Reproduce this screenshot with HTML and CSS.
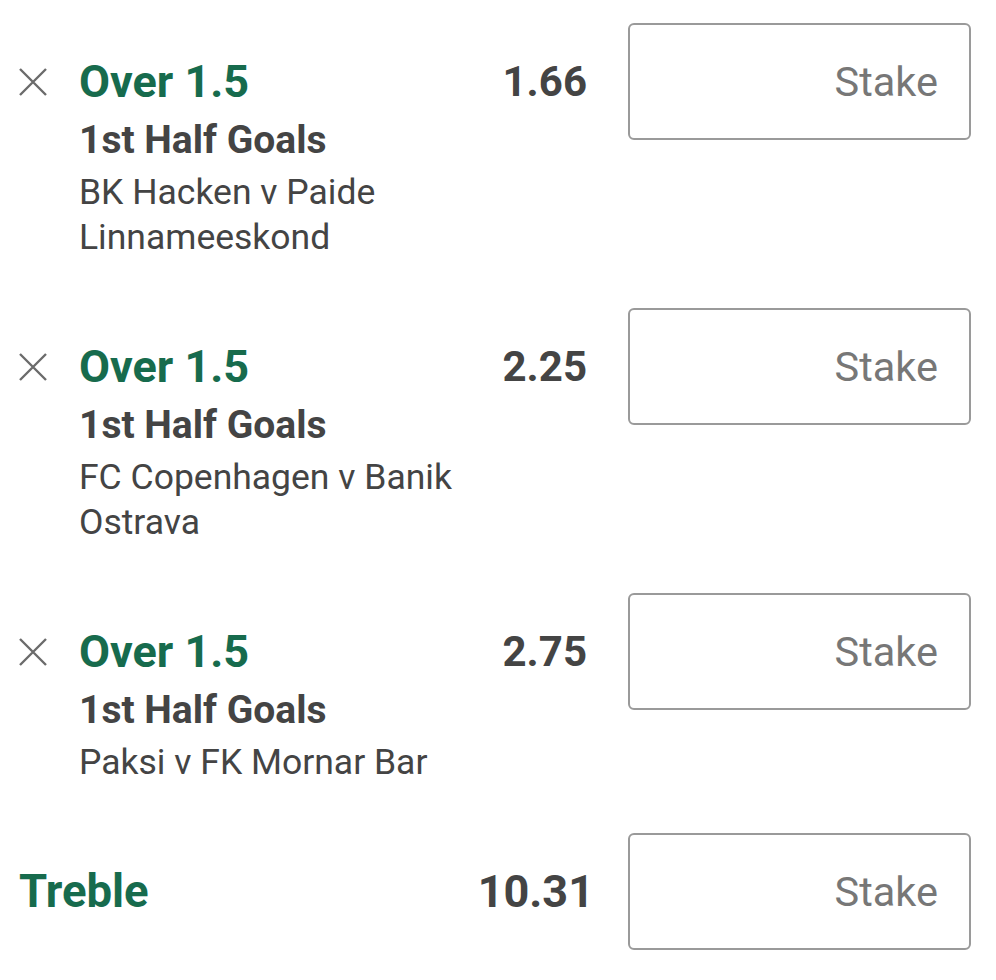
FILE: index.html
```html
<!DOCTYPE html>
<html lang="en">
<head>
    <meta charset="UTF-8">
    <meta name="viewport" content="width=device-width, initial-scale=1.0">
    <title>Bet Slip</title>
    <link rel="stylesheet" href="styles.css">
</head>
<body>
    <div class="slip">
        <!-- Selection 1 -->
        <div class="bet-row">
            <div class="remove">
                <svg width="28" height="28" viewBox="0 0 28 28"><path d="M1 1 L27 27 M27 1 L1 27" stroke="#6b6b6b" stroke-width="2.4" fill="none"/></svg>
            </div>
            <div class="bet-info">
                <div class="bet-title">Over 1.5</div>
                <div class="bet-market">1st Half Goals</div>
                <div class="bet-event">BK Hacken v Paide Linnameeskond</div>
            </div>
            <div class="bet-odds">1.66</div>
            <div class="stake-box"><span class="stake-label">Stake</span></div>
        </div>
        <!-- Selection 2 -->
        <div class="bet-row">
            <div class="remove">
                <svg width="28" height="28" viewBox="0 0 28 28"><path d="M1 1 L27 27 M27 1 L1 27" stroke="#6b6b6b" stroke-width="2.4" fill="none"/></svg>
            </div>
            <div class="bet-info">
                <div class="bet-title">Over 1.5</div>
                <div class="bet-market">1st Half Goals</div>
                <div class="bet-event">FC Copenhagen v Banik Ostrava</div>
            </div>
            <div class="bet-odds">2.25</div>
            <div class="stake-box"><span class="stake-label">Stake</span></div>
        </div>
        <!-- Selection 3 -->
        <div class="bet-row">
            <div class="remove">
                <svg width="28" height="28" viewBox="0 0 28 28"><path d="M1 1 L27 27 M27 1 L1 27" stroke="#6b6b6b" stroke-width="2.4" fill="none"/></svg>
            </div>
            <div class="bet-info">
                <div class="bet-title">Over 1.5</div>
                <div class="bet-market">1st Half Goals</div>
                <div class="bet-event">Paksi v FK Mornar Bar</div>
            </div>
            <div class="bet-odds">2.75</div>
            <div class="stake-box"><span class="stake-label">Stake</span></div>
        </div>
        <!-- Multiple -->
        <div class="multi-row">
            <div class="multi-title">Treble</div>
            <div class="multi-odds">10.31</div>
            <div class="stake-box"><span class="stake-label">Stake</span></div>
        </div>
    </div>
</body>
</html>
```

FILE: styles.css
```css
body {
    font-family: Roboto, 'Noto Sans', sans-serif;
    background-color: #ffffff;
    margin: 0;
    padding: 0;
}
.slip {
    padding: 23px 25px 0 0;
}
.bet-row {
    display: flex;
    align-items: flex-start;
    margin-bottom: 48px;
}
.remove {
    width: 79px;
    padding-top: 45px;
    padding-left: 19px;
    box-sizing: border-box;
    flex-shrink: 0;
}
.remove svg {
    display: block;
}
.bet-info {
    flex: 1;
    padding-top: 31px;
    color: #444444;
}
.bet-title {
    color: #176b4d;
    font-weight: 700;
    font-size: 45px;
    line-height: 56px;
}
.bet-market {
    font-weight: 700;
    font-size: 39px;
    line-height: 60px;
}
.bet-event {
    font-size: 35.5px;
    line-height: 45px;
    max-width: 400px;
}
.bet-odds {
    padding-top: 31px;
    font-size: 42px;
    line-height: 56px;
    font-weight: 700;
    color: #444444;
    margin-right: 41px;
}
.stake-box {
    width: 343px;
    height: 117px;
    box-sizing: border-box;
    border: 2px solid #9a9a9a;
    border-radius: 6px;
    display: flex;
    align-items: center;
    justify-content: flex-end;
    padding-right: 31px;
    flex-shrink: 0;
}
.stake-label {
    font-size: 41.5px;
    color: #777777;
}
.multi-row {
    display: flex;
    align-items: center;
}
.multi-title {
    flex: 1;
    padding-left: 19px;
    color: #176b4d;
    font-weight: 700;
    font-size: 45.5px;
}
.multi-odds {
    font-size: 45px;
    font-weight: 700;
    color: #444444;
    margin-right: 34px;
}
```
